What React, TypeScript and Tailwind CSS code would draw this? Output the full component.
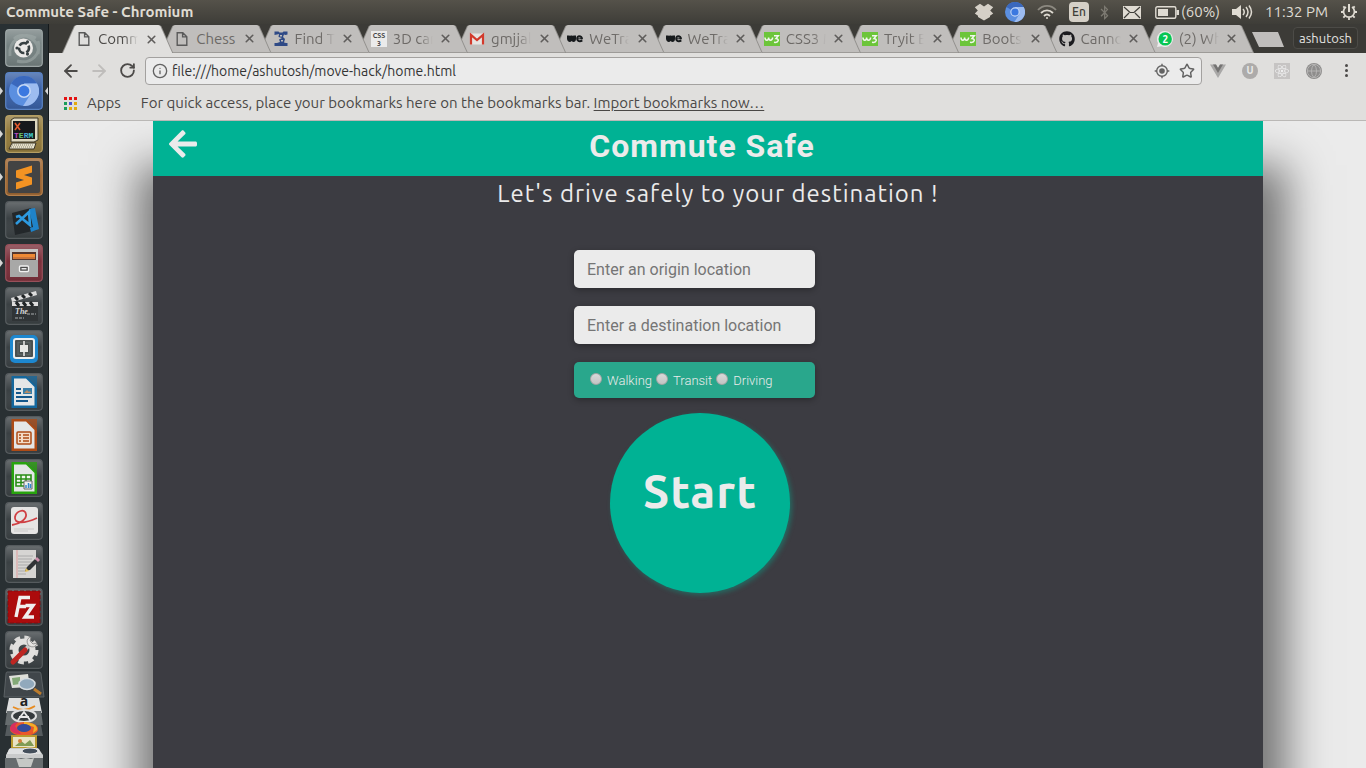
import React from "react";
import { FaArrowLeft, FaGithub, FaReact, FaBluetoothB } from "react-icons/fa";
import { ArrowLeft, ArrowRight, RotateCw, Info, Star, X, Globe } from "lucide-react";

const UI = "font-['Ubuntu','Noto_Sans',sans-serif]";

function Chromium({ size }: { size: number }) {
  return (
    <svg width={size} height={size} viewBox="0 0 30 30" aria-hidden="true">
      <circle cx="15" cy="15" r="15" fill="#5b8fe0" />
      <path d="M15 15 2 7.500A15 15 0 0 1 28 7.500H15Z" fill="#3a68bd" />
      <path d="M15 7.500H28A15 15 0 0 1 14 30L21.500 18.500Z" fill="#9dbcf0" />
      <circle cx="15" cy="15" r="7" fill="#c6d8f5" />
      <circle cx="15" cy="15" r="5.400" fill="#3b78e0" />
    </svg>
  );
}

function PageIcon() {
  return (
    <svg width="16" height="16" viewBox="0 0 16 16" fill="none" stroke="#5a5a5a" strokeWidth="1.400" aria-hidden="true">
      <path d="M3.200 1.700h5.600l4 4v8.600H3.200ZM8.600 1.700v4.200h4.200" />
    </svg>
  );
}

function FindIcon() {
  return (
    <svg width="16" height="16" viewBox="0 0 16 16" fill="#2f4a86" aria-hidden="true">
      <path d="M1.500.5h4l1 1h3l1-1h4v3l-2 .5-1.500-.5-1 2.500 2 2-1 3.500 2 .5h1.500v3H1.500v-3H4l3-1-1-2.500 3-1.500-3.500-1 .5-3L4 3.500l-2.500.5Z" />
      <path d="M7 4h2v1.500H7ZM8 9h2v1.500H8Z" fill="#c0bebc" />
    </svg>
  );
}

function CssIcon() {
  return (
    <svg width="16" height="16" viewBox="0 0 16 16" aria-hidden="true">
      <path fill="#ebebeb" d="M0 0h16v16H0z" />
      <text x="8" y="6.800" fontSize="7" fontWeight="700" fontFamily="Ubuntu, Noto Sans" textAnchor="middle" fill="#444">CSS</text>
      <text x="8" y="14.800" fontSize="7" fontWeight="700" fontFamily="Ubuntu, Noto Sans" textAnchor="middle" fill="#444">3</text>
    </svg>
  );
}

function GmailIcon() {
  return (
    <svg width="16" height="16" viewBox="0 0 16 16" aria-hidden="true">
      <path fill="#e6e4e2" d="M1 2.500h14v11H1z" />
      <path d="M2 13.500V3.800L8 9l6-5.200v9.700" fill="none" stroke="#d23a2c" strokeWidth="2.200" />
    </svg>
  );
}

function WeIcon() {
  return (
    <svg width="16" height="16" viewBox="0 0 16 16" aria-hidden="true">
      <path d="M0 4.500h2.500l.5.600.6-.6h1.700l.6.600.6-.6H9v3.300c0 3.400-2.800 4.200-4.300 2.300C3.200 11.800 0 11 0 7.500Z" fill="#171a1c" />
      <path d="M12.200 4.300c2.200 0 3.800 1.300 3.800 3.900h-4.700c.3 1.300 2.300 1.200 3.500.3l1 1.700c-2.500 1.900-6.600 1-6.600-2.500 0-2 1.200-3.400 3-3.400Z" fill="#171a1c" />
      <path d="M11.400 6.900h2" stroke="#c0bebc" strokeWidth=".9" />
    </svg>
  );
}

function W3Icon() {
  return (
    <svg width="16" height="16" viewBox="0 0 16 16" aria-hidden="true">
      <path fill="#6cc53a" d="M0 1h16v14H0z" />
      <path d="M1 6.500c0 3.500 3.600 3.500 3.600 0 0 3.500 4 3.500 4 0M10 4.700h4.300L12 7.500c3.300 0 3.300 4.600-2 3.800" fill="none" stroke="#f2f7ee" strokeWidth="1.500" />
    </svg>
  );
}

function WhatsAppIcon() {
  return (
    <svg width="16" height="16" viewBox="0 0 16 16" aria-hidden="true">
      <path d="M8 0a8 8 0 1 1-3.500 15.200L0 16l1-4A8 8 0 0 1 8 0Z" fill="#ebebeb" />
      <circle cx="8.200" cy="7.900" r="6.700" fill="#07c653" />
      <text x="8.200" y="11.700" fontSize="10" fontWeight="700" fontFamily="Ubuntu, Noto Sans" textAnchor="middle" fill="#fff">2</text>
    </svg>
  );
}

const tabs: { title: string; icon: React.ReactNode }[] = [
  { title: "Comm", icon: <PageIcon /> },
  { title: "Chess", icon: <PageIcon /> },
  { title: "Find T", icon: <FindIcon /> },
  { title: "3D car", icon: <CssIcon /> },
  { title: "gmjjal", icon: <GmailIcon /> },
  { title: "WeTra", icon: <WeIcon /> },
  { title: "WeTra", icon: <WeIcon /> },
  { title: "CSS3 M", icon: <W3Icon /> },
  { title: "Tryit E", icon: <W3Icon /> },
  { title: "Boots", icon: <W3Icon /> },
  { title: "Canno", icon: <FaGithub size={16} color="#1b1b1f" /> },
  { title: "(2) Wh", icon: <WhatsAppIcon /> },
];

const tabClip = "[clip-path:polygon(0_100%,12px_1px,14px_0,calc(100%_-_14px)_0,calc(100%_-_12px)_1px,100%_100%)]";

function Tab({ index, title, icon }: { index: number; title: string; icon: React.ReactNode }) {
  const active = index === 0;
  const fade = title === "Chess" ? "" : "[mask-image:linear-gradient(to_right,black_65%,transparent)]";
  return (
    <div className={`relative h-7 min-w-0 flex-1 -mr-[13px] px-px bg-[#92908d] ${tabClip}`} style={{ zIndex: 20 - index }}>
      <div
        className={`flex h-full items-center pl-[13px] ${tabClip} ${
          active ? "bg-[#e0dfdd] text-[#4d4b49]" : "bg-[#c0bebc] border-b border-[#9d9b98] text-[#6d6a67]"
        }`}
      >
        <span className="flex w-4 shrink-0 justify-center">{icon}</span>
        <span className={`ml-1.5 w-10 shrink-0 overflow-hidden whitespace-nowrap text-[15px] leading-5 ${fade}`}>
          {title}
        </span>
        <button aria-label={`Close ${title}`} className="ml-[7px] flex w-3 justify-center text-[#5f5d5b]">
          <X size={13} strokeWidth={3} className="shrink-0" />
        </button>
      </div>
    </div>
  );
}

function TopPanel() {
  return (
    <header className="flex h-6 shrink-0 items-center bg-gradient-to-b from-[#55524a] to-[#3e3d38] pl-1.5 pr-2 text-[#dfdbd2]">
      <span className="flex-1 text-[15px] font-bold">Commute Safe - Chromium</span>
      <div className="flex items-center text-[15px]">
        <svg width="20" height="18" viewBox="0 0 20 18" className="mr-[11px]" aria-hidden="true">
          <path d="M6 .8 10 3.600 14 .8 19.200 4.300 16.200 7.500 19.200 10.500 16 12.800V14L10 17.500 4 14V12.800L.8 10.500 3.800 7.500.8 4.300Z" fill="#d5d0c7" />
        </svg>
        <Chromium size={20} />
        <svg width="20" height="16" viewBox="0 0 20 16" className="ml-3" fill="none" stroke="#dfdbd2" strokeWidth="1.800" aria-hidden="true">
          <path d="M1 6c5-5.500 13-5.500 18 0" stroke="#8c8980" />
          <path d="M4 9c3.500-3.600 8.500-3.600 12 0M7 12c2-2 4-2 6 0" />
          <circle cx="10" cy="14" r="1" fill="#dfdbd2" stroke="none" />
        </svg>
        <span className="ml-3 flex h-5 w-5 items-center justify-center rounded-sm bg-[#d5d0c7] text-[12px] font-medium text-[#3e3d38]">En</span>
        <FaBluetoothB size={15} className="ml-2" color="#7d7a72" />
        <svg width="18" height="13" viewBox="0 0 18 13" className="ml-[11px]" aria-hidden="true">
          <path d="M0 0h18v13H0z" fill="#dfdbd2" />
          <path d="M1 1l6 5.500h4L17 1M1 12l5-5M17 12l-5-5" fill="none" stroke="#3e3d38" strokeWidth="1.200" />
        </svg>
        <svg width="24" height="13" viewBox="0 0 24 13" className="ml-3.5" aria-hidden="true">
          <rect x=".8" y=".8" width="20" height="11.400" rx="1.500" fill="none" stroke="#dfdbd2" strokeWidth="1.400" />
          <path d="M3 3h10v7H3zM21.500 4H24v5h-2.500z" fill="#dfdbd2" />
        </svg>
        <span className="ml-0.5">(60%)</span>
        <svg width="21" height="16" viewBox="0 0 21 16" className="ml-3" aria-hidden="true">
          <path d="M0 5h4l5-4v14l-5-4H0Z" fill="#dfdbd2" />
          <path d="M11 5q2.500 3 0 6M14 3q4 5 0 10M17 1.500q5 6.500 0 13" fill="none" stroke="#dfdbd2" strokeWidth="1.500" />
        </svg>
        <span className="ml-3">11:32 PM</span>
        <svg width="18" height="18" viewBox="0 0 18 18" className="ml-3" fill="none" stroke="#dfdbd2" aria-hidden="true">
          <path d="M6 4a5.500 5.500 0 1 0 6 0" strokeWidth="1.800" />
          <path d="M9 1v8" strokeWidth="2" />
          <path d="M1 9h2.500M14.500 9H17M3.300 3.300 5 5M13 5l1.700-1.700M3.300 14.700 5 13M13 13l1.700 1.700M9 14.500V17" strokeWidth="1.800" />
        </svg>
      </div>
    </header>
  );
}

function LibreDoc({ color, children }: { color: string; children: React.ReactNode }) {
  return (
    <g>
      <path d="M6.500 3h15L32 13.500V35H6.500Z" fill={color} />
      <path d="M9 5.500h12L29.500 14v18.500H9Z" fill="#e4e6e6" />
      <path d="M22 3h10v10.500Z" fill={color} opacity=".75" />
      {children}
    </g>
  );
}

const launchers: { name: string; fill: string; edge: string; open?: boolean; art: React.ReactNode }[] = [
  {
    name: "Dash", fill: "#748080", edge: "#9ca5a5",
    art: (
      <g fill="none">
        <path d="M5 27C3 12 17 2 31 9M33 12c4 12-6 24-21 20M9 10C18 1 36 11 33 25" stroke="#a5b0ae" strokeWidth="3" opacity=".5" />
        <circle cx="18.500" cy="19" r="9.500" fill="#ebe9e7" />
        <circle cx="19" cy="19" r="5" stroke="#384042" strokeWidth="2.600" strokeDasharray="8.470 2" strokeDashoffset="3.200" />
        <circle cx="12" cy="19" r="1.600" fill="#384042" /><circle cx="22.500" cy="12.900" r="1.600" fill="#384042" /><circle cx="22.500" cy="25.100" r="1.600" fill="#384042" />
      </g>
    ),
  },
  {
    name: "Chromium", fill: "#3960a5", edge: "#5a83c4", open: true,
    art: <svg x="4" y="4" width="30" height="30"><Chromium size={30} /></svg>,
  },
  {
    name: "XTerm", fill: "#927a3c", edge: "#b59e62", open: true,
    art: (
      <g>
        <path d="M6 5 9 3h24v22l-4 2H6Z" fill="#ddd7bf" stroke="#3a3425" />
        <path d="M8 6h22v18H8z" fill="#17191c" />
        <path d="m10 8 5 7m0-7-5 7" stroke="#e05a2f" strokeWidth="1.600" />
        <text x="9" y="23" fontSize="8" fontWeight="700" fontFamily="Liberation Mono"><tspan fill="#b64dc4">T</tspan><tspan fill="#67c46a">E</tspan><tspan fill="#48a8d9">R</tspan><tspan fill="#41c9c9">M</tspan></text>
        <path d="M7 28h24l-2 6H4Z" fill="#e5e0cc" stroke="#3a3425" />
        <path d="M7 30h21M6 32h21" stroke="#8a836b" strokeDasharray="1 1" />
      </g>
    ),
  },
  {
    name: "Sublime Text", fill: "#9a6533", edge: "#b57f4b", open: true,
    art: (
      <g>
        <rect x="3" y="3" width="32" height="32" rx="2" fill="#434343" />
        <path d="M11 12.500 27 7.500v7L19 17l8 2.500v7l-16 5v-7l8-2.500-8-2.500Z" fill="#f39323" />
      </g>
    ),
  },
  {
    name: "Visual Studio Code", fill: "#3b4144", edge: "#565b5e",
    art: (
      <g>
        <path d="M7 12 26 7l6 22-22 5Z" fill="#23272a" />
        <path d="m24 8 6-1 4 21-8 3-1-4 3-1Z" fill="#1f83c9" />
        <path d="m11 16 3-1 11 9-1-13-13 12" fill="none" stroke="#2d9ae0" strokeWidth="2.600" />
      </g>
    ),
  },
  {
    name: "Files", fill: "#7a2f3a", edge: "#97505a", open: true,
    art: (
      <g>
        <path d="M5 5h28v28H5z" fill="#c6c5c3" />
        <path d="M7 8h24v8H7z" fill="#56372d" /><path d="M8 10h22v3H8z" fill="#ef8a35" /><path d="M8 13h22v2H8z" fill="#c9743a" />
        <path d="M5 16h28v17H5z" fill="#a8a8a7" />
        <rect x="14.500" y="22" width="9" height="5.500" rx="1" fill="#4b4b4b" stroke="#f1f1f1" strokeWidth="1.400" /><path d="M16.500 24h5v1.500h-5z" fill="#e8e8e8" />
      </g>
    ),
  },
  {
    name: "Video Editor", fill: "#3b4144", edge: "#565b5e",
    art: (
      <g>
        <path d="M7 17h26v17H7z" fill="#303436" /><path d="M7 15h26v4H7z" fill="#dcdcdc" /><path d="M6 11 31 4l1 4L7 15Z" fill="#dcdcdc" />
        <path d="m10 10 3 3M17 8l3 3M24 6l3 3M11 15l3 4M18 15l3 4M25 15l3 4" stroke="#202426" strokeWidth="3" />
        <text x="10" y="27" fontSize="8" fontStyle="italic" fontWeight="700" fontFamily="Liberation Serif" fill="#d7d7d7">The</text>
        <path d="M22 27h9M10 31h9" stroke="#a9adaf" strokeDasharray="3 1" />
      </g>
    ),
  },
  {
    name: "Brackets", fill: "#3b4144", edge: "#565b5e",
    art: (
      <g>
        <rect x="5" y="5" width="28" height="28" rx="5" fill="#1d87cf" />
        <rect x="9" y="9" width="20" height="19" rx="2" fill="#4a5051" stroke="#eceeef" strokeWidth="2" />
        <path d="M17.500 12.500H13v12h4.500M20.500 12.500H25v12h-4.500" fill="none" stroke="#5c6364" strokeWidth="1.400" />
        <path d="M18.200 11h1.600v4h3.200v7h-3.200v4h-1.600v-4H15v-7h3.200Z" fill="#e6e7e6" />
      </g>
    ),
  },
  {
    name: "LibreOffice Writer", fill: "#3b4144", edge: "#565b5e",
    art: <LibreDoc color="#14679c"><path d="M11 16h5M11 20h5M11 24h16M11 28h12" stroke="#14578a" strokeWidth="2" /><path d="M18 15h9v6h-9z" fill="#397ea7" /><path d="m19 20 3-3 2 2 1-1 1 2Z" fill="#b98b64" /></LibreDoc>,
  },
  {
    name: "LibreOffice Impress", fill: "#3b4144", edge: "#565b5e",
    art: <LibreDoc color="#ad4b16"><rect x="12" y="16" width="14" height="12" rx="1" fill="#f3dcc7" stroke="#ad4b16" strokeWidth="1.500" /><path d="M14 19h2M18 19h6M14 22h2M18 22h6M14 25h2M18 25h6" stroke="#ad4b16" strokeWidth="1.700" /></LibreDoc>,
  },
  {
    name: "LibreOffice Calc", fill: "#3b4144", edge: "#565b5e",
    art: <LibreDoc color="#28a30e"><path d="M11 16h15v11H11z" fill="#f2f7ef" stroke="#288d16" strokeWidth="1.600" /><path d="M11 20h15M11 23.500h15M16 16v11M21 16v11" stroke="#288d16" strokeWidth="1.500" /><path d="M19 22h8v8h-8z" fill="#eee" stroke="#666" /><path d="M21 29v-3M23.500 29v-5M25.500 29v-4" stroke="#3488c9" strokeWidth="1.500" /></LibreDoc>,
  },
  {
    name: "Document Viewer", fill: "#3b4144", edge: "#565b5e",
    art: (
      <g fill="none">
        <rect x="6" y="5" width="27" height="27" rx="3" fill="#e6e5e4" />
        <path d="M7 23c8-1 15-6 14-11-1-6-10-3-11 3-1 7 9 7 22 1" stroke="#cf3f43" strokeWidth="1.800" /><path d="M9 27h20M9 29h14" stroke="#cbcac9" />
      </g>
    ),
  },
  {
    name: "Text Editor", fill: "#3b4144", edge: "#565b5e",
    art: (
      <g>
        <path d="M8 5h23v28H8z" fill="#d6d5d3" /><path d="M12 5v28" stroke="#df9d9d" />
        <path d="M13 11h15M13 14h14M13 17h15M13 20h12M13 23h11M13 26h8M13 29h8" stroke="#aaa" />
        <path d="m20 26 2-4 8-8 3 3-8 8Z" fill="#303336" /><path d="m30 14 2-2 3 3-2 2Z" fill="#cf91ae" /><path d="m20 27 1-4 3 3Z" fill="#e1bf59" />
      </g>
    ),
  },
  {
    name: "FileZilla", fill: "#3b4144", edge: "#565b5e",
    art: (
      <g>
        <path d="M3 3h32v32H3z" fill="#ac0b0c" stroke="#7d1113" strokeDasharray="4 2" />
        <path d="M11 29 15 9.500h10M13 18.500h8M20.500 17.500H28L20 29h9" fill="none" stroke="#f0eeee" strokeWidth="3.400" />
      </g>
    ),
  },
  {
    name: "System Settings", fill: "#3b4144", edge: "#565b5e",
    art: (
      <g fill="none">
        <circle cx="19" cy="19" r="12" stroke="#dbdad8" strokeWidth="5" strokeDasharray="5.400 4.025" /><circle cx="19" cy="19" r="8.500" stroke="#e1e0de" strokeWidth="6" />
        <path d="m26 12-6 7" stroke="#c9c8c6" strokeWidth="3.500" /><path d="M26 6a5 5 0 1 0 6 6l-4 1-3-3Z" fill="#e5e4e2" stroke="#777" strokeWidth=".7" />
        <path d="M8 31 20 19" stroke="#bd2622" strokeWidth="5" strokeLinecap="round" />
      </g>
    ),
  },
];

function Launcher() {
  return (
    <nav aria-label="Launcher" className="flex w-[49px] shrink-0 flex-col items-center gap-[5px] overflow-hidden border-r border-[#14191b] bg-[#293033] pt-[5px]">
      {launchers.map((l, i) => (
        <a key={l.name} href="#" aria-label={l.name} className="relative block h-[38px] w-[38px] shrink-0">
          <svg width="38" height="38" viewBox="0 0 38 38" aria-hidden="true">
            <defs>
              <linearGradient id={`shine${i}`} x1="0" y1="0" x2="0" y2="1">
                <stop offset="0" stopColor="#fff" stopOpacity=".24" />
                <stop offset=".45" stopColor="#fff" stopOpacity="0" />
                <stop offset="1" stopColor="#000" stopOpacity=".1" />
              </linearGradient>
            </defs>
            <rect x=".7" y=".7" width="36.600" height="36.600" rx="3.500" fill={l.fill} />
            <rect x=".7" y=".7" width="36.600" height="36.600" rx="3.500" fill={`url(#shine${i})`} stroke={l.edge} strokeWidth="1.200" />
            {l.art}
          </svg>
          {l.open && <span className="absolute -left-[5px] top-[15px] h-2 w-[3px] bg-[#d6d6d6] [clip-path:polygon(0_0,100%_50%,0_100%)]" />}
          {i === 1 && <span className="absolute -right-[5px] top-[15px] h-2 w-[3px] bg-[#d6d6d6] [clip-path:polygon(100%_0,0_50%,100%_100%)]" />}
        </a>
      ))}
      <svg width="46" height="98" viewBox="0 0 46 98" className="-mt-[3px] shrink-0" aria-hidden="true">
        <path d="M6 1h32q2 0 2 2l3 23H3L5 3q0-2 1-2Z" fill="#40464a" stroke="#5b6164" />
        <path d="m8 5 19-2 2 13-18 1Z" fill="#dedfd9" /><path d="m11 7 8-1v7l-7 1Z" fill="#83a977" />
        <ellipse cx="26" cy="13" rx="8" ry="5.500" fill="#91a9bc" stroke="#d5dce0" strokeWidth="1.500" /><path d="m33 18 7 5" stroke="#bc7c2d" strokeWidth="3" />
        <path d="M8 27h30l3 15H5Z" fill="#dedfdf" />
        <text x="23" y="35" textAnchor="middle" fontSize="14" fontWeight="700" fontFamily="Open Sans" fill="#222">a</text>
        <path d="M12 36q11 6 22-1" fill="none" stroke="#e88b20" strokeWidth="1.600" />
        <path d="M6 40h34l2 14H4Z" fill="#666c6e" />
        <ellipse cx="23" cy="45" rx="12" ry="6" fill="#353a3d" stroke="#dedfdf" strokeWidth="2" />
        <path d="m17 49 6-8 6 8M18 46h10" fill="none" stroke="#e7e7e7" strokeWidth="1.800" />
        <path d="M6 54h34l2 11H4Z" fill="#555b5e" />
        <ellipse cx="23" cy="58" rx="14" ry="7" fill="#e9582a" /><path d="M9 58q0-6 8-7l-3 4 6 8q-9 0-11-5Z" fill="#d92f5e" /><path d="M23 51q14 1 13 8l-4 3 1-6-10-3Z" fill="#f3af25" /><ellipse cx="23" cy="57" rx="7" ry="4" fill="#344b9b" />
        <path d="M11 65h24v12H11z" fill="#e9e3c3" stroke="#b99a2f" strokeWidth="2" /><path d="m14 75 6-5 4 3 5-4 4 6Z" fill="#809b54" /><circle cx="19" cy="70" r="2" fill="#d3813c" />
        <path d="M5 84 9 77h28l5 7v5H5Z" fill="#c9cbcb" /><path d="M8 78h30l2 5H6Z" fill="#dfe1e1" /><ellipse cx="29" cy="80" rx="8" ry="3" fill="#444f5b" stroke="#eee" />
        <path d="M4 87h38v11H4Z" fill="#666c6e" /><path d="m15 87 5 1 5-1 5 1 3-1-3 9H18Z" fill="#c5c8c5" />
      </svg>
    </nav>
  );
}

const appsColors = ["#e31212", "#e31212", "#e31212", "#1b9d58", "#4a52d8", "#e3aa10", "#1b9d58", "#e3aa10", "#e3aa10"];

function BrowserChrome() {
  return (
    <>
      <div className="flex h-[29px] shrink-0 items-end bg-[#3c3b37] pl-[13px]">
        <div className="flex w-[1179px] min-w-0">
          {tabs.map((t, i) => (
            <Tab key={i} index={i} title={t.title} icon={t.icon} />
          ))}
        </div>
        <button aria-label="New tab" className="mb-1.5 ml-[11px] h-[15px] w-[32px] shrink-0 bg-[#c0bebc] [clip-path:polygon(0_0,26px_0,100%_100%,7px_100%)]" />
        <div className="flex flex-1 justify-end pr-2">
          <button className="mb-1 h-[22px] w-[65px] shrink-0 rounded border border-[#4c4b47] bg-[#373632] text-center text-[13px] leading-5 text-[#e3e2e0]">
            ashutosh
          </button>
        </div>
      </div>
      <div className="border-b border-[#bab8b6] bg-[#e0dfdd]">
        <div className="flex h-[35px] items-center pl-3 pr-3 text-[#4c4a48]">
          <button aria-label="Back"><ArrowLeft size={20} strokeWidth={2.2} /></button>
          <button aria-label="Forward" className="ml-2 text-[#bfbdbb]"><ArrowRight size={20} strokeWidth={2.2} /></button>
          <button aria-label="Reload" className="ml-2.5"><RotateCw size={17} strokeWidth={2.6} /></button>
          <div className="ml-[9px] flex h-7 min-w-0 flex-1 items-center rounded-sm border border-[#a3a19f] bg-[#ebebeb] px-1.5">
            <Info size={16} strokeWidth={2} className="shrink-0 text-[#626262]" />
            <input
              aria-label="Address"
              defaultValue="file:///home/ashutosh/move-hack/home.html"
              className="ml-1 min-w-0 flex-1 bg-transparent text-[14px] leading-5 text-[#343434] outline-none"
            />
            <svg width="16" height="16" viewBox="0 0 16 16" fill="none" stroke="#636363" strokeWidth="1.400" aria-hidden="true">
              <circle cx="8" cy="8" r="5.300" /><circle cx="8" cy="8" r="2.800" fill="#636363" stroke="none" /><path d="M8 .7v2M8 13.300v2M.7 8h2M13.300 8h2" />
            </svg>
            <Star size={16} strokeWidth={2.2} className="ml-[9px] text-[#636363]" />
          </div>
          <div className="ml-2 flex items-center gap-4">
            <svg width="16" height="16" viewBox="0 0 16 16" aria-hidden="true">
              <path d="M0 1.500h6L8 5l2-3.500h6L8 15Z" fill="#a9a8a7" />
              <path d="M3 1.500h3L8 5l2-3.500h3L8 10Z" fill="#747372" />
            </svg>
            <span className="flex h-4 w-4 items-center justify-center rounded-full bg-[#adabaa] text-[10px] font-bold leading-4 text-[#ebebeb]">U</span>
            <span className="flex h-4 w-4 items-center justify-center bg-[#c6c4c3] text-[#efefef]"><FaReact size={14} /></span>
            <span className="flex h-4 w-4 items-center justify-center rounded-full bg-[#8e8d8c] text-[#b5b4b3]"><Globe size={16} strokeWidth={1.5} /></span>
            <button aria-label="Menu" className="flex w-4 flex-col items-center gap-0.5">
              <span className="h-[3px] w-[3px] rounded-full bg-[#4c4a48]" />
              <span className="h-[3px] w-[3px] rounded-full bg-[#4c4a48]" />
              <span className="h-[3px] w-[3px] rounded-full bg-[#4c4a48]" />
            </button>
          </div>
        </div>
        <div className="flex h-8 items-center whitespace-nowrap pb-0.5 pl-[15px] text-[15px] text-[#4a4846]">
          <svg width="13" height="13" viewBox="0 0 13 13" aria-hidden="true">
            {appsColors.map((c, i) => (
              <rect key={i} x={(i % 3) * 5} y={Math.floor(i / 3) * 5} width="3" height="3" fill={c} />
            ))}
          </svg>
          <button className="ml-2.5">Apps</button>
          <span className="ml-5">
            For quick access, place your bookmarks here on the bookmarks bar.{" "}
            <a href="#" className="underline underline-offset-2">Import bookmarks now…</a>
          </span>
        </div>
      </div>
    </>
  );
}

const field =
  "block h-[38px] w-full rounded-[5px] bg-[#ebebeb] px-[13px] text-[16px] text-[#444] shadow-[0_2px_6px_rgba(0,0,0,0.3)] outline-none placeholder:text-[#757575]";

function CommutePage() {
  return (
    <main className="flex min-h-0 flex-1 overflow-hidden bg-[#ebebeb] pl-[104px] pr-[103px] font-[Roboto,sans-serif]">
      <div className="min-w-0 flex-1 bg-[#3c3c42] text-[#ebebeb] shadow-[4px_64px_40px_20px_rgba(0,0,0,0.5)]">
        <div className="flex h-[55px] items-center bg-[#00b294] px-[14px] pb-1.5">
          <a href="#" aria-label="Back" className="pb-1"><FaArrowLeft size={32} color="#ebebeb" /></a>
          <h1 className="flex-1 pr-11 text-center text-[32px] font-bold leading-10 tracking-[1px]">Commute Safe</h1>
        </div>
        <p className={`${UI} pl-5 text-center text-[24px] leading-9 tracking-[1px]`}>Let's drive safely to your destination !</p>
        <form className="flex flex-col items-center pt-[38px]" onSubmit={(e) => e.preventDefault()}>
          <div className="pr-[27px]">
            <div className="flex w-[241px] flex-col gap-[18px]">
              <input aria-label="Origin" placeholder="Enter an origin location" className={field} />
              <input aria-label="Destination" placeholder="Enter a destination location" className={field} />
              <div role="radiogroup" aria-label="Travel mode" className="flex h-9 items-center gap-1 rounded-[5px] bg-[#29a78c] pl-4 pt-px text-[13px] font-light shadow-[0_2px_6px_rgba(0,0,0,0.3)]">
                {["Walking", "Transit", "Driving"].map((m) => (
                  <label key={m} className="flex items-center gap-[5px]">
                    <input type="radio" name="mode" className="mb-1 h-3 w-3 appearance-none rounded-full border border-[#a5a5a5] bg-gradient-to-b from-[#d9d9d9] to-[#c3c3c3] checked:border-4 checked:border-[#555]" />
                    {m}
                  </label>
                ))}
              </div>
            </div>
          </div>
          <div className="pr-4 pt-[15px]">
            <button className={`${UI} h-[180px] w-[180px] rounded-full bg-[#00b294] pb-6 text-[46px] font-semibold tracking-[1px] shadow-[2px_2px_5px_rgba(0,178,148,0.4)]`}>
              Start
            </button>
          </div>
        </form>
      </div>
    </main>
  );
}

export default function App() {
  return (
    <div className={`flex h-screen flex-col overflow-hidden bg-[#3c3b37] ${UI}`}>
      <TopPanel />
      <div className="flex min-h-0 flex-1">
        <Launcher />
        <div className="flex min-w-0 flex-1 flex-col">
          <BrowserChrome />
          <CommutePage />
        </div>
      </div>
    </div>
  );
}
